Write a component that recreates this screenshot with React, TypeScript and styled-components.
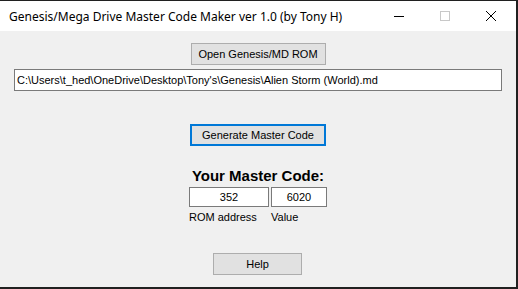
import { FC } from 'react'
import styled, { createGlobalStyle } from 'styled-components'

const Global = createGlobalStyle`
  html, body {
    margin: 0;
    padding: 0;
    background: #202020;
  }
`

const Window = styled.div`
  width: 516px;
  height: 286px;
  margin-top: 1px;
  display: flex;
  flex-direction: column;
  background: #f0f0f0;
`

const TitleBar = styled.div`
  height: 30px;
  flex: none;
  display: flex;
  align-items: center;
  background: #ffffff;
  padding-left: 9px;
  font-family: 'Noto Sans', 'Open Sans', sans-serif;
  font-size: 12px;
  color: #000;
`

const Title = styled.div`
  flex: 1;
  white-space: nowrap;
`

const Controls = styled.div`
  display: flex;
  height: 100%;
  margin-right: 2px;
`

const Control = styled.div`
  width: 46px;
  height: 100%;
  display: flex;
  align-items: center;
  justify-content: center;
`

const Client = styled.div`
  flex: 1;
  display: flex;
  flex-direction: column;
  align-items: center;
  padding-top: 12px;
  font-family: 'Liberation Sans', Arial, sans-serif;
  font-size: 11px;
  color: #000;
`

const Button = styled.div<{ $width: number; $focused?: boolean }>`
  box-sizing: border-box;
  width: ${(p) => p.$width}px;
  height: 22px;
  display: flex;
  align-items: center;
  justify-content: center;
  background: #e1e1e1;
  border: ${(p) => (p.$focused ? '2px solid #0078d7' : '1px solid #adadad')};
`

const PathBox = styled.div`
  box-sizing: border-box;
  align-self: flex-start;
  margin: 4px 0 0 14px;
  width: 488px;
  height: 22px;
  padding-left: 2px;
  display: flex;
  align-items: center;
  background: #fff;
  border: 1px solid #7a7a7a;
  white-space: nowrap;
`

const CodeHeading = styled.div`
  margin-top: 21px;
  font-size: 15px;
  font-weight: bold;
  line-height: 17px;
`

const CodeGrid = styled.div`
  margin-top: 3px;
  display: grid;
  grid-template-columns: 80px 56px;
  column-gap: 2px;
  row-gap: 3px;
`

const ValueBox = styled.div`
  box-sizing: border-box;
  height: 20px;
  display: flex;
  align-items: center;
  justify-content: center;
  background: #fff;
  border: 1px solid #7a7a7a;
`

const Caption = styled.div`
  line-height: 14px;
`

const HelpButton = styled(Button)`
  margin-top: 29px;
  margin-right: 1px;
`

const WinIcon: FC<{ kind: 'min' | 'max' | 'close' }> = ({ kind }) => (
  <svg width="10" height="10" viewBox="0 0 10 10">
    {kind === 'min' && <line x1="0" y1="5.5" x2="10" y2="5.5" stroke="#000" strokeWidth="1" />}
    {kind === 'max' && <rect x="0.5" y="0.5" width="9" height="9" fill="none" stroke="#c8c8c8" strokeWidth="1" />}
    {kind === 'close' && (
      <path d="M0 0 L10 10 M10 0 L0 10" stroke="#000" strokeWidth="1" />
    )}
  </svg>
)

export default function App() {
  return (
    <>
      <Global />
      <Window>
        <TitleBar>
          <Title>Genesis/Mega Drive Master Code Maker ver 1.0 (by Tony H)</Title>
          <Controls>
            <Control><WinIcon kind="min" /></Control>
            <Control><WinIcon kind="max" /></Control>
            <Control><WinIcon kind="close" /></Control>
          </Controls>
        </TitleBar>
        <Client>
          <Button $width={135}>Open Genesis/MD ROM</Button>
          <PathBox>C:\Users\t_hed\OneDrive\Desktop\Tony's\Genesis\Alien Storm (World).md</PathBox>
          <Button $width={136} $focused style={{ marginTop: 33 }}>Generate Master Code</Button>
          <CodeHeading>Your Master Code:</CodeHeading>
          <CodeGrid>
            <ValueBox>352</ValueBox>
            <ValueBox>6020</ValueBox>
            <Caption>ROM address</Caption>
            <Caption>Value</Caption>
          </CodeGrid>
          <HelpButton $width={89}>Help</HelpButton>
        </Client>
      </Window>
    </>
  )
}
